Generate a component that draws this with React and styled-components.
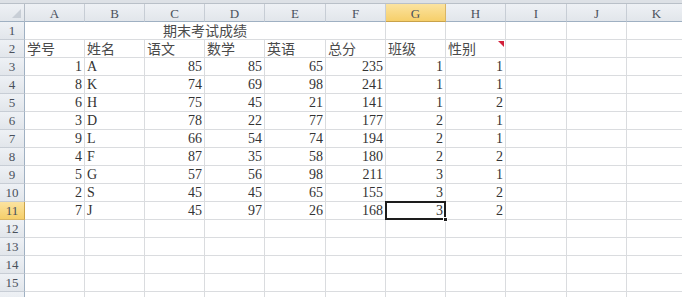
import React from 'react';
import styled, { createGlobalStyle, css } from 'styled-components';

const GlobalStyle = createGlobalStyle`
  html, body {
    margin: 0;
    padding: 0;
    background: #ffffff;
    overflow: hidden;
  }
`;

const COLS = ['A', 'B', 'C', 'D', 'E', 'F', 'G', 'H', 'I', 'J', 'K'];
const WIDTHS = [60, 60, 60, 60, 61, 60, 60, 60, 61, 60, 60];

const HEAD = ['学号', '姓名', '语文', '数学', '英语', '总分', '班级', '性别'];

const DATA = [
  [1, 'A', 85, 85, 65, 235, 1, 1],
  [8, 'K', 74, 69, 98, 241, 1, 1],
  [6, 'H', 75, 45, 21, 141, 1, 2],
  [3, 'D', 78, 22, 77, 177, 2, 1],
  [9, 'L', 66, 54, 74, 194, 2, 1],
  [4, 'F', 87, 35, 58, 180, 2, 2],
  [5, 'G', 57, 56, 98, 211, 3, 1],
  [2, 'S', 45, 45, 65, 155, 3, 2],
  [7, 'J', 45, 97, 26, 168, 3, 2],
];

const ACTIVE_COL = 'G';
const ACTIVE_ROW = 11;

const Wrap = styled.div`
  width: 682px;
  height: 297px;
  overflow: hidden;
  background: #fff;
`;

const TopStrip = styled.div`
  height: 4px;
  box-sizing: border-box;
  background: #dde1e6;
  border-bottom: 1px solid #b9c0c8;
`;

const Sheet = styled.div`
  display: grid;
  grid-template-columns: 25px ${WIDTHS.map((w) => `${w}px`).join(' ')};
  grid-auto-rows: 18px;
`;

const headerBase = css`
  box-sizing: border-box;
  font-family: "Liberation Serif", serif;
  font-size: 13px;
  line-height: 18px;
  color: #4a515c;
  text-align: center;
  background: ${(p) =>
    p.$active
      ? 'linear-gradient(#fbe3a0, #f6cf6a)'
      : 'linear-gradient(#eef1f5, #e2e6eb)'};
`;

const Corner = styled.div`
  ${headerBase};
  position: relative;
  border-right: 1px solid #b4bcc6;
  border-bottom: 1px solid #9fb0c2;

  &::after {
    content: '';
    position: absolute;
    right: 3px;
    bottom: 3px;
    border-style: solid;
    border-width: 0 0 9px 9px;
    border-color: transparent transparent #c8ced6 transparent;
  }
`;

const ColHeader = styled.div`
  ${headerBase};
  padding-top: 1px;
  border-right: 1px solid ${(p) => (p.$active ? '#d9b564' : '#c7cdd5')};
  border-bottom: 1px solid ${(p) => (p.$active ? '#c9a24a' : '#9fb0c2')};
`;

const RowHeader = styled.div`
  ${headerBase};
  border-right: 1px solid ${(p) => (p.$active ? '#c9a24a' : '#9fb0c2')};
  border-bottom: 1px solid ${(p) => (p.$active ? '#d9b564' : '#c7cdd5')};
`;

const Cell = styled.div`
  position: relative;
  box-sizing: border-box;
  padding: 0 2px;
  border-right: 1px solid ${(p) => (p.$merged ? 'transparent' : '#dadcdf')};
  border-bottom: 1px solid #dadcdf;
  font-family: "Liberation Serif", "Noto Sans CJK SC", serif;
  font-size: 14px;
  line-height: 18px;
  color: #333;
  white-space: nowrap;
  text-align: ${(p) => (p.$num ? 'right' : p.$center ? 'center' : 'left')};
  grid-column: ${(p) => (p.$span ? `span ${p.$span}` : 'auto')};

  ${(p) =>
    p.$selected &&
    css`
      &::after {
        content: '';
        position: absolute;
        left: -1px;
        top: -1px;
        right: -1px;
        bottom: -1px;
        border: 2px solid #1d1d1d;
        pointer-events: none;
      }
      &::before {
        content: '';
        position: absolute;
        right: -3px;
        bottom: -3px;
        width: 5px;
        height: 5px;
        background: #1d1d1d;
        border: 1px solid #fff;
        box-sizing: border-box;
        z-index: 2;
      }
    `}

  ${(p) =>
    p.$comment &&
    css`
      &::after {
        content: '';
        position: absolute;
        right: 1px;
        top: 1px;
        border-style: solid;
        border-width: 0 6px 6px 0;
        border-color: transparent #d2203a transparent transparent;
      }
    `}
`;

const Zh = styled.span`
  font-family: "Noto Sans CJK SC", sans-serif;
  font-size: 14px;
  line-height: 16px;
  color: #4a4a4a;
`;

const TOTAL_ROWS = 16;

export default function App() {
  const rows = [];

  // title row (merged A1:F1)
  rows.push(
    <React.Fragment key="r1">
      <RowHeader>1</RowHeader>
      <Cell $span={6} $center>
        <Zh>期末考试成绩</Zh>
      </Cell>
      {COLS.slice(6).map((c) => (
        <Cell key={c} />
      ))}
    </React.Fragment>
  );

  // column names
  rows.push(
    <React.Fragment key="r2">
      <RowHeader>2</RowHeader>
      {COLS.map((c, i) => (
        <Cell key={c} $comment={c === 'H'}>
          {HEAD[i] ? <Zh>{HEAD[i]}</Zh> : null}
        </Cell>
      ))}
    </React.Fragment>
  );

  DATA.forEach((rec, r) => {
    const n = r + 3;
    rows.push(
      <React.Fragment key={`r${n}`}>
        <RowHeader $active={n === ACTIVE_ROW}>{n}</RowHeader>
        {COLS.map((c, i) => {
          const v = rec[i];
          return (
            <Cell
              key={c}
              $num={typeof v === 'number'}
              $selected={n === ACTIVE_ROW && c === ACTIVE_COL}
            >
              {v}
            </Cell>
          );
        })}
      </React.Fragment>
    );
  });

  for (let n = 12; n <= TOTAL_ROWS; n++) {
    rows.push(
      <React.Fragment key={`r${n}`}>
        <RowHeader>{n}</RowHeader>
        {COLS.map((c) => (
          <Cell key={c} />
        ))}
      </React.Fragment>
    );
  }

  return (
    <Wrap>
      <GlobalStyle />
      <TopStrip />
      <Sheet>
        <Corner />
        {COLS.map((c) => (
          <ColHeader key={c} $active={c === ACTIVE_COL}>
            {c}
          </ColHeader>
        ))}
        {rows}
      </Sheet>
    </Wrap>
  );
}
